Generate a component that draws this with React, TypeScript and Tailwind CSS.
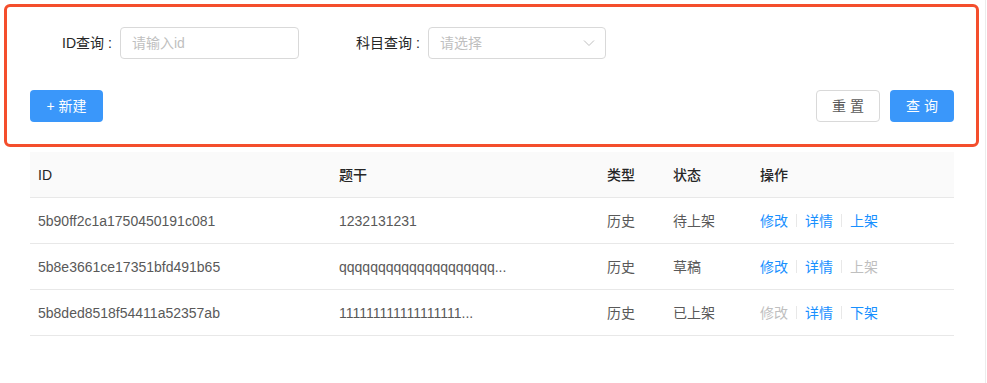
type Row = {
  id: string;
  stem: string;
  type: string;
  status: string;
  canEdit: boolean;
  shelf: string;
  canShelf: boolean;
};

const rows: Row[] = [
  { id: "5b90ff2c1a1750450191c081", stem: "1232131231", type: "历史", status: "待上架", canEdit: true, shelf: "上架", canShelf: true },
  { id: "5b8e3661ce17351bfd491b65", stem: "qqqqqqqqqqqqqqqqqqqq...", type: "历史", status: "草稿", canEdit: true, shelf: "上架", canShelf: false },
  { id: "5b8ded8518f54411a52357ab", stem: "111111111111111111...", type: "历史", status: "已上架", canEdit: false, shelf: "下架", canShelf: true },
];

const font = { fontFamily: '"Liberation Sans", "Noto Sans CJK SC", sans-serif' };

function Divider() {
  return <span className="inline-block w-px h-[13px] bg-[#e8e8e8] mx-2 align-middle" />;
}

function Link({ label, enabled }: { label: string; enabled: boolean }) {
  return (
    <span className={enabled ? "text-[#1890ff] cursor-pointer" : "text-[#bfbfbf]"}>{label}</span>
  );
}

export default function App() {
  return (
    <div className="w-[987px] h-[383px] bg-white flex text-sm" style={font}>
      <div className="flex-1 flex flex-col pt-1">
        <div className="ml-1 w-[975px] h-[143px] border-[3px] border-[#f44e2c] rounded-md pt-5 pl-[23px] pr-[22px]">
          <div className="flex items-center h-8">
            <label className="w-[90px] text-right pr-2 text-[#262626]">
              ID查询<span className="ml-1">:</span>
            </label>
            <input
              placeholder="请输入id"
              className="w-[179px] h-8 border border-[#d9d9d9] rounded px-[11px] text-sm placeholder:text-[#bfbfbf] outline-none"
            />
            <label className="ml-[39px] w-[90px] text-right pr-2 text-[#262626]">
              科目查询<span className="ml-1">:</span>
            </label>
            <div className="w-[178px] h-8 border border-[#d9d9d9] rounded pl-[11px] pr-[10px] flex items-center justify-between">
              <span className="text-[#bfbfbf]">请选择</span>
              <svg width="12" height="8" viewBox="0 0 12 8" fill="none" stroke="#bfbfbf" strokeWidth="1">
                <polyline points="1,1.5 6,6.5 11,1.5" />
              </svg>
            </div>
          </div>
          <div className="flex items-center justify-between mt-[31px]">
            <button className="w-[73px] h-8 rounded bg-[#3a97fa] text-white">+ 新建</button>
            <div className="flex gap-[10px]">
              <button className="w-16 h-8 rounded border border-[#d9d9d9] text-[#595959] tracking-[4px] pl-1">重置</button>
              <button className="w-16 h-8 rounded bg-[#3a97fa] text-white tracking-[4px] pl-1">查询</button>
            </div>
          </div>
        </div>

        <div className="mx-[30px] mt-[5px] w-[924px]">
          <div className="grid grid-cols-[301px_268px_66px_87px_202px] h-[46px] items-center bg-[#fafafa] border-b border-[#e8e8e8] text-[#262626] font-medium">
            <div className="px-2">ID</div>
            <div className="px-2">题干</div>
            <div className="px-2">类型</div>
            <div className="px-2">状态</div>
            <div className="px-2">操作</div>
          </div>
          {rows.map((r) => (
            <div
              key={r.id}
              className="grid grid-cols-[301px_268px_66px_87px_202px] h-[46px] items-center border-b border-[#e8e8e8] text-[#595959]"
            >
              <div className="px-2">{r.id}</div>
              <div className="px-2">{r.stem}</div>
              <div className="px-2">{r.type}</div>
              <div className="px-2">{r.status}</div>
              <div className="px-2 flex items-center">
                <Link label="修改" enabled={r.canEdit} />
                <Divider />
                <Link label="详情" enabled />
                <Divider />
                <Link label={r.shelf} enabled={r.canShelf} />
              </div>
            </div>
          ))}
        </div>
      </div>
      <div className="w-[2px] border-l border-[#ececec]" />
    </div>
  );
}
